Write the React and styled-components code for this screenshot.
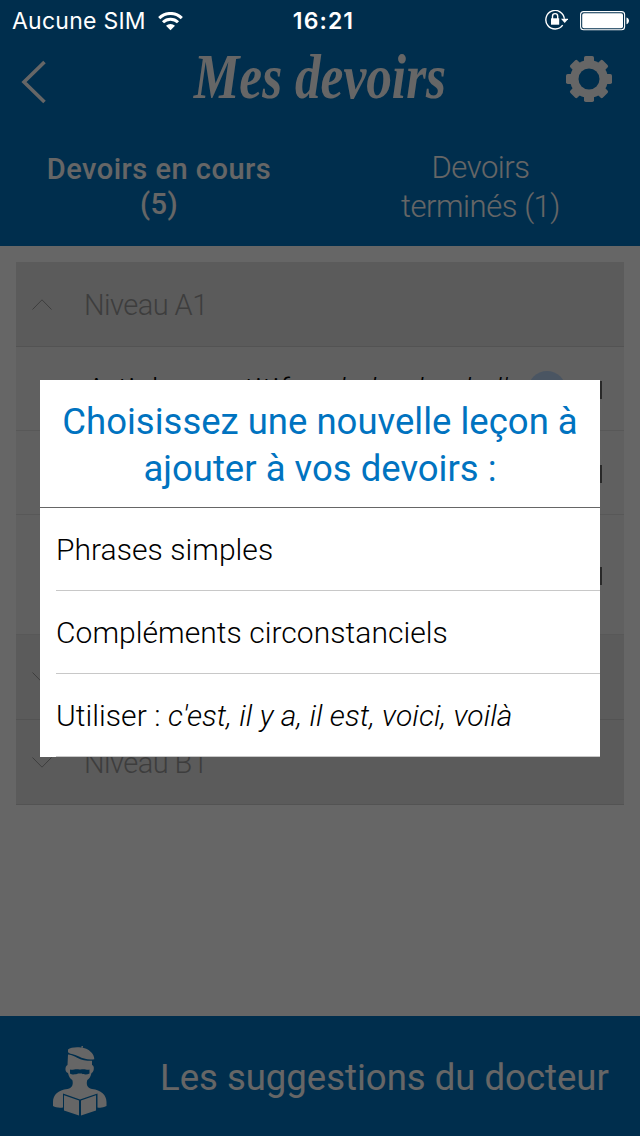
import React from 'react';
import styled, { createGlobalStyle } from 'styled-components';

const Global = createGlobalStyle`
  *{box-sizing:border-box}
  body{margin:0;background:#fff;font-family:Roboto,"Liberation Sans",sans-serif}
`;
const Screen = styled.div`position:relative;width:640px;height:1136px;overflow:hidden;background:#fff;display:flex;flex-direction:column;`;
const Header = styled.header`height:246px;padding-top:40px;background:#0073c0;color:#fff;display:flex;flex-direction:column;`;
const NavBar = styled.div`height:88px;flex:none;display:flex;align-items:center;justify-content:space-between;padding:0 28px 10px 21px;`;
const BackButton = styled.span`display:flex;padding-top:6px;`;
const Title = styled.h1`margin:0;font:italic bold 63px/60px "Liberation Serif",serif;white-space:nowrap;transform:scaleX(.815);padding:0 0 5px 32px;`;
const Tabs = styled.div`display:grid;grid-template-columns:1fr 1fr;`;
const Tab = styled.div`
  text-align:center;font-size:${p => (p.$active ? 29 : 31)}px;font-weight:${p => (p.$active ? 500 : 300)};
  line-height:${p => (p.$active ? 35 : 39)}px;padding:${p => (p.$active ? '24px 40px 0 38px' : '20px 69px 0 70px')};letter-spacing:${p => (p.$active ? 0.5 : -0.45)}px;
`;
const Levels = styled.main`flex:1;padding:16px 16px 0;`;
const Level = styled.div`
  height:85px;display:flex;align-items:center;gap:32px;padding-left:16px;background:#e4e4e4;border-bottom:1px solid #cfcfcf;
  color:#9a9a9a;font-size:29px;font-weight:300;letter-spacing:-.55px;
`;
const LevelName = styled.span`padding-top:2px;`;
const Lesson = styled.div`
  height:${p => p.$height}px;background:#f0f0f0;border-bottom:1px solid #dcdcdc;display:flex;align-items:center;padding:0 22px 0 71px;
  font-size:30px;font-weight:300;color:#000;white-space:nowrap;
`;
const LessonName = styled.span`flex:1;padding-bottom:1px;letter-spacing:.65px;`;
const Badge = styled.span`width:38px;height:38px;border-radius:50%;background:#b9d4f5;margin:2px 16px 0 0;`;
const Handle = styled.span`width:20px;height:18px;margin-top:2px;border-right:2px solid #666;`;
const Footer = styled.footer`height:120px;background:#0073c0;color:#fff;display:flex;align-items:center;padding:2px 0 0 52px;gap:52px;font-size:36.5px;white-space:nowrap;`;
const Portrait = styled.span`display:flex;padding-top:8px;`;
const Shade = styled.div`position:absolute;inset:0;background:rgba(0,0,0,.6);display:flex;align-items:center;justify-content:center;`;
const Dialog = styled.section`width:560px;height:377px;background:#fff;`;
const DialogTitle = styled.h2`
  margin:0;height:128px;padding-top:18px;border-bottom:1px solid #666;text-align:center;color:#0073c0;
  font-size:36.5px;font-weight:400;line-height:47px;letter-spacing:0;
`;
const Choice = styled.div`
  margin-left:16px;height:83px;padding-top:2px;border-bottom:1px solid #c8c8c8;display:flex;align-items:center;white-space:pre;
  font-size:30px;font-weight:300;color:#000;letter-spacing:.05px;
`;
const StatusBar = styled.div`
  position:absolute;top:0;left:0;width:640px;height:42px;display:grid;grid-template-columns:1fr auto 1fr;align-items:center;
  padding:0 11px 0 12px;color:#fff;font-family:Inter,sans-serif;font-size:23px;
`;
const StatusGroup = styled.div`display:flex;align-items:center;gap:12px;letter-spacing:.25px;justify-content:${p => (p.$end ? 'flex-end' : 'flex-start')};`;
const Clock = styled.span`font-weight:600;letter-spacing:1.1px;padding-left:6px;`;

const Chevron = ({ up }) => (
  <svg width="20" height="11" viewBox="0 0 20 11" fill="none" stroke="#9a9a9a" strokeWidth="1">
    <path d={up ? 'M.5 10.5 10 .8l9.5 9.7' : 'M.5.5 10 10.2 19.5.5'} />
  </svg>
);
const Back = () => (
  <svg width="26" height="44" viewBox="0 0 26 44" fill="none" stroke="#fff" strokeWidth="3.6"><path d="M23.5 2 3 22l20.5 20" /></svg>
);
const Gear = () => (
  <svg width="46" height="46" viewBox="-23 -23 46 46">
    <mask id="hub"><rect x="-23" y="-23" width="46" height="46" fill="#fff" /><circle r="10.5" fill="#000" /></mask>
    <g mask="url(#hub)" fill="#fff">
      <circle r="19" />
      {[0, 45, 90, 135].map(a => <rect key={a} x="-5" y="-23" width="10" height="46" rx="1.8" transform={`rotate(${a})`} />)}
    </g>
  </svg>
);
const Wifi = () => (
  <svg width="25" height="19" viewBox="0 0 25 19" fill="none" stroke="#fff" strokeWidth="3">
    <path d="M1.2 6.1a16 16 0 0 1 22.6 0M5 10.3a10.7 10.7 0 0 1 15 0" />
    <path d="M8 13.8a6.5 6.5 0 0 1 9 0L12.5 18.3Z" fill="#fff" stroke="none" />
  </svg>
);
const Lock = () => (
  <svg width="24" height="22" viewBox="-1 1 24 22" fill="none" stroke="#fff" strokeWidth="1.4">
    <path d="M17.7 16.2A9.3 9.3 0 1 1 19.4 9.8" />
    <path d="M16 9.7h7.400l-3.700 4.400Z" fill="#fff" stroke="none" />
    <rect x="6" y="9.3" width="8.2" height="6.4" fill="#fff" stroke="none" />
    <path d="M7.5 10V7.2a2.6 2.6 0 0 1 5.2 0V10" />
  </svg>
);
const Battery = () => (
  <svg width="49" height="20" viewBox="0 0 49 20">
    <rect x=".6" y=".6" width="44" height="18.2" rx="3" fill="none" stroke="#fff" strokeWidth="1.1" />
    <rect x="2.2" y="2.2" width="40.8" height="15" rx="1.8" fill="#fff" />
    <path d="M46.5 6.4c3.3.8 3.3 6 0 6.8Z" fill="#fff" />
  </svg>
);
const Doctor = () => (
  <svg width="56" height="70" viewBox="0 0 56 70" fill="#fff">
    <path d="M16 3.5C20 0 34 .6 38 5.2C41 7.5 42.3 10.5 42.3 13.2C36 14.2 31 12.5 27 10.5C22 8 17 8 16 6Z" />
    <path d="M29.5 0h1.5l-.5 2h-1Z" />
    <path d="M16 8.5C21 9 26 12.5 30 13.8C34 15 37.5 15 40 14.7V19C43 19.5 42 26.5 39.5 27C38.5 31 37 33 35.3 34C34 38 35 42 40 43C49 44 54.5 49 54.5 56V60C51 62 48 61.8 45.5 61.5V47.5L28 53.5 11 47.5V61.5C7 62 3.5 61.5 1 60V56C1 49 6 44 15.5 43C20.5 42 21.5 38 20.3 34C18.5 33 17 31 16 27C13 26.5 12.5 20.5 15.5 19Z" />
    <path fill="#0073c0" d="M18 23.5C21 24.5 23 22.5 27.5 23.6H28.5C33 22.5 35 24.5 37.5 23.5V27.5C35 29 31 28.5 29.8 27.5H26C24 28.500 20 29 18 27.500Z" />
    <path d="M12 49.3 27 54.6V69.5L12 64.5ZM29 54.6 44 49.3V64.5L29 69.5Z" />
  </svg>
);

export default function App() {
  return (
    <>
      <Global />
      <Screen>
        <Header>
          <NavBar><BackButton><Back /></BackButton><Title>Mes devoirs</Title><Gear /></NavBar>
          <Tabs><Tab $active>Devoirs en cours (5)</Tab><Tab>Devoirs terminés (1)</Tab></Tabs>
        </Header>
        <Levels>
          <Level><Chevron up /><LevelName>Niveau A1</LevelName></Level>
          <Lesson $height={84}><LessonName>Articles partitifs : <i>de la, du, de l'</i></LessonName><Badge /><Handle /></Lesson>
          <Lesson $height={84}><LessonName /><Handle /></Lesson>
          <Lesson $height={120}><LessonName /><Handle /></Lesson>
          <Level><Chevron /><LevelName>Niveau A2</LevelName></Level>
          <Level><Chevron /><LevelName>Niveau B1</LevelName></Level>
        </Levels>
        <Footer><Portrait><Doctor /></Portrait>Les suggestions du docteur</Footer>
        <Shade>
          <Dialog>
            <DialogTitle>Choisissez une nouvelle leçon à ajouter à vos devoirs :</DialogTitle>
            <Choice>Phrases simples</Choice>
            <Choice>Compléments circonstanciels</Choice>
            <Choice>Utiliser : <i>c'est, il y a, il est, voici, voilà</i></Choice>
          </Dialog>
        </Shade>
        <StatusBar>
          <StatusGroup>Aucune SIM<Wifi /></StatusGroup>
          <Clock>16:21</Clock>
          <StatusGroup $end><Lock /><Battery /></StatusGroup>
        </StatusBar>
      </Screen>
    </>
  );
}
